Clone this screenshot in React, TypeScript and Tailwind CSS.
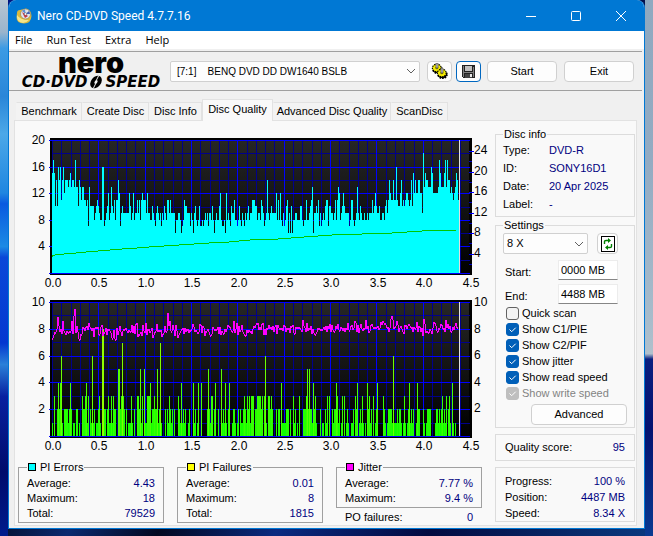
import React from 'react';

const PI_ERRORS = [
  'fhfaeagegbegceeedefd eedhddaedbddbbab7daa aa89aba988gg789ac89d a9b8bbec79a999999ca8 9c899b9',
  'b8bcbbb9c9988a9879a98979 8a98bb9b99996889986 78baa999798 69a878a77878989 799 8a8689 88ac877 86c898 7a99b88 78a879 879 89a899',
  'bbbaa8998ba9789e989a9999c8b8c87978 ab696a68899888aa8788b889abd699a9',
  'b797898abb7aa9989b8bdc89aca999978b b8789d98a98898898999b9aca99a88998a',
  'b9becbbebbgbaaceababccbabeafcecceec c9idfeedddgfcccccdhfdddfhdheecdcbcdfeb9eb',
];

const PI_FAILURES = [
  '1030024246 1022221242 0110220100 3223413021 6120112310 8822023113 1322005523 7320201113 1020033251',
  '3051133341 2232251271 0002021321 2020003214 1212001200 0412014004 0000025213 3024002005 1214102400',
  '1221012021 12321323',
  '1333022333 3230361033 2320002022 0411112220 2003120103 0002223525 2214231000 2011021303 0021224312',
  '0130301210 0112032401 2131010423 1203012400 0003210122 2216111212 2101310124 1212001422 0002101222',
  '2000012212 1231213023 104101',
];

const decode = (lines: string[]) =>
  lines
    .join('')
    .replace(/ /g, '')
    .split('')
    .map((c) => parseInt(c, 36));

const errors = decode(PI_ERRORS);
const failures = decode(PI_FAILURES);

const JITTER_PEAKS: Record<number, number> = {
  5: 8.9, 10: 8.6, 19: 8.6, 21: 9.0, 22: 9.5, 26: 7.3, 27: 7.2, 36: 8.5, 62: 7.3, 63: 7.2, 83: 8.4,
  84: 8.5, 85: 7.4, 93: 8.5, 115: 9.2, 109: 7.4, 117: 8.6, 181: 8.6, 250: 8.7, 304: 7.8, 313: 8.7,
  338: 8.8, 339: 9.0, 340: 8.7, 370: 7.5, 371: 8.8, 393: 8.7,
};

let seed = 77;
const noise = () => {
  seed = (seed * 16807) % 2147483647;
  return seed / 2147483647 - 0.5;
};

const jitter = Array.from({ length: 406 }, (_, i) => {
  const n = noise() + noise();
  const base = i < 200 ? 7.87 : i < 300 ? 8.05 : 8.15;
  return JITTER_PEAKS[i] ?? base + n * 0.6;
});

const speed =
  '0,117 1,115 3,115 12,114 24,113 34,112 46,111 58,110 70,109 85,108 97,107 112,106 127,105 142,104 157,103 177,102 198,100 226,99 252,97 280,95 310,94 340,93 370,91 400,90 404,90';

const xs = Array.from({ length: 10 }, (_, i) => i);

type ChartProps = {
  id: string;
  top: number;
  height: number;
  plotHeight: number;
  leftLabels: string[];
  rightLabels: { text: string; y: number }[];
  label: string;
  ticks?: boolean;
  children: React.ReactNode;
};

function Chart({ id, top, height, plotHeight, leftLabels, rightLabels, label, ticks, children }: ChartProps) {
  const rowStep = plotHeight / 5;
  return (
    <svg viewBox={`-37 ${-top} 480 ${height}`} className="block h-auto w-full" role="img" aria-label={label}>
      <defs>
        <linearGradient id={id} x1="0" y1="0" x2="0" y2="1">
          <stop offset="0" stopColor="#262626" />
          <stop offset="1" stopColor="#000" />
        </linearGradient>
      </defs>
      <g shapeRendering="crispEdges">
        <rect x="-2" y="-2" width="422" height={plotHeight + 4} fill="#000" />
        <rect x="0" y="0" width="417" height={plotHeight} fill={`url(#${id})`} />
        {Array.from({ length: 45 }, (_, i) => (
          <rect key={i} x={Math.round(i * 9.27)} y="0" width="1" height={plotHeight} fill="#00008b" />
        ))}
        {[0, 1, 2, 3, 4].map((i) => (
          <rect key={i} x="0" y={Math.round((i + 0.5) * rowStep)} width="418" height="1" fill="#00008b" />
        ))}
        {xs.slice(1, 9).map((i) => (
          <rect key={i} x={Math.round(i * 46.35)} y="0" width="1" height={plotHeight} fill="#0000ff" />
        ))}
        {[0, 1, 2, 3, 4, 5].map((i) => (
          <rect key={i} x="-3" y={Math.round(i * rowStep)} width="421" height="1" fill="#0000ff" />
        ))}
        {ticks &&
          rightLabels.map((r) => (
            <rect key={r.text} x="417" y={r.y + 2} width="5" height="1" fill="#0000ff" />
          ))}
        {ticks &&
          rightLabels.map((r) => (
            <rect key={r.text} x="417" y={r.y + 12} width="3" height="1" fill="#0000c0" />
          ))}
        {children}
        <rect x="407" y="0" width="1" height={plotHeight} fill="#e0e0e0" />
      </g>
      <g className="fill-black font-['Liberation_Sans',Arial,sans-serif] text-[12px]">
        {leftLabels.map((t, i) => (
          <text key={t} x="-7" y={Math.round(i * rowStep) + 4} textAnchor="end">
            {t}
          </text>
        ))}
        {rightLabels.map((r) => (
          <text key={r.text} x="422" y={r.y + 5}>
            {r.text}
          </text>
        ))}
        {xs.map((i) => (
          <text key={i} x={Math.round(i * 46.4) + 1} y={plotHeight + 14} textAnchor="middle">
            {(i / 2).toFixed(1)}
          </text>
        ))}
      </g>
    </svg>
  );
}

function ErrorsChart() {
  return (
    <Chart
      id="plot-errors"
      label="PI errors and read speed"
      top={9}
      height={160}
      plotHeight={133}
      ticks
      leftLabels={['20', '16', '12', '8', '4']}
      rightLabels={[
        { text: '24', y: 9 },
        { text: '20', y: 30 },
        { text: '16', y: 50 },
        { text: '12', y: 71 },
        { text: '8', y: 91 },
        { text: '4', y: 112 },
      ]}
    >
      {errors.slice(0, 407).map((v, i) => {
        const h = Math.round(v * 6.65);
        return <rect key={i} x={i} y={133 - h} width="1" height={h} fill="#00ffff" />;
      })}
      <polyline points={speed} fill="none" stroke="#00c800" strokeWidth="1" />
    </Chart>
  );
}

function FailuresChart() {
  return (
    <Chart
      id="plot-failures"
      label="PI failures and jitter"
      top={11}
      height={163}
      plotHeight={134}
      leftLabels={['10', '8', '6', '4', '2']}
      rightLabels={[
        { text: '10', y: -1 },
        { text: '8', y: 26 },
        { text: '6', y: 52 },
        { text: '4', y: 79 },
        { text: '2', y: 105 },
      ]}
    >
      {failures.slice(0, 406).map((v, i) => {
        const h = Math.round(v * 13.35);
        return <rect key={i} x={i} y={134 - h} width="1" height={h} fill={`rgb(${v * 18}, 255, 0)`} />;
      })}
      {jitter.map((v, i) => {
        const y = Math.round(134 - v * 13.35);
        const before = Math.round(134 - (jitter[i - 1] ?? v) * 13.35);
        const y0 = Math.min(y, before);
        return <rect key={i} x={i} y={y0} width="1" height={Math.max(2, Math.abs(y - before))} fill="#ff00ff" />;
      })}
    </Chart>
  );
}

function Row({ label, value }: { label: string; value: string }) {
  return (
    <div className="flex justify-between">
      <dt>{label}</dt>
      <dd className="text-[#000080]">{value}</dd>
    </div>
  );
}

function Stat({ title, swatch, rows }: { title: string; swatch: string; rows: [string, string][] }) {
  return (
    <fieldset className="border border-[#a0a0a0] px-2 pb-px">
      <legend className="flex h-[14px] items-center gap-1 px-px leading-[14px]">
        <span className={`size-2 border border-black ${swatch}`} />
        {title}
      </legend>
      <dl className="pt-[2px] leading-[15px]">
        {rows.map(([l, v]) => (
          <Row key={l} label={l} value={v} />
        ))}
      </dl>
    </fieldset>
  );
}

function Check({ label, checked = false, disabled = false }: { label: string; checked?: boolean; disabled?: boolean }) {
  return (
    <label className={`flex h-4 items-center gap-[3px] ${disabled ? 'text-[#838383]' : ''}`}>
      <span className="grid size-[13px]">
        <input
          type="checkbox"
          defaultChecked={checked}
          disabled={disabled}
          className="peer col-start-1 row-start-1 size-[13px] appearance-none rounded-[3px] border border-[#626262] bg-[#f3f3f3] checked:border-[#005fb8] checked:bg-[#005fb8] disabled:border-[#bfbfbf] disabled:bg-[#bfbfbf]"
        />
        <svg viewBox="0 0 13 13" className="pointer-events-none invisible col-start-1 row-start-1 size-[13px] peer-checked:visible">
          <path d="M3.5 6.5 5.7 8.7 9.7 4.7" fill="none" stroke="#fff" strokeWidth="1" />
        </svg>
      </span>
      {label}
    </label>
  );
}

function Chevron() {
  return (
    <svg viewBox="0 0 10 6" className="pointer-events-none col-start-1 row-start-1 mr-1 h-[6px] w-[10px] self-center justify-self-end">
      <path d="M1 1 5 5 9 1" fill="none" stroke="#606060" />
    </svg>
  );
}

function AppIcon() {
  return (
    <svg viewBox="0 0 16 16" className="size-4">
      <path d="M1 5Q1 2 4 2L10 .5Q15.500 2 15.500 8Q15 15.500 8 15.500Q.5 15.500 .5 9Z" fill="#d9b93c" />
      <path d="M1 7Q4 12 13 12Q10 15 7 15Q1 14 1 9Z" fill="#f5e58a" />
      <circle cx="9.5" cy="6" r="5" fill="#dfe6ee" stroke="#8a7a50" strokeWidth=".6" />
      <path d="M9.5 6 6 3A5 5 0 0 1 9 1.5Z" fill="#5d8fd8" />
      <path d="M9.5 6 13 3A5 5 0 0 1 14 6Z" fill="#3c5fb8" />
      <path d="M6 4 12 8 9 10Z" fill="#c8323c" />
      <circle cx="9.5" cy="6" r="1.3" fill="#fff" stroke="#445" strokeWidth=".5" />
    </svg>
  );
}

function Gear({ x, y }: { x: number; y: number }) {
  return (
    <g transform={`translate(${x} ${y})`}>
      <ellipse cx="5.5" cy="6.5" rx="4.5" ry="3.8" fill="#000" stroke="#000" strokeWidth="1.6" strokeDasharray="1.6 1" />
      <ellipse cx="4.8" cy="5" rx="4.4" ry="3.8" fill="#f4ec00" stroke="#000" strokeWidth="1.2" strokeDasharray="1.4 .9" />
      <ellipse cx="4.8" cy="5" rx="1.6" ry="1.3" fill="#8a8400" />
      <path d="M4 0H6V5H4Z" fill="#c8c8c8" stroke="#333" strokeWidth=".6" />
    </g>
  );
}

function Logo() {
  return (
    <div className="flex w-[146px] flex-col items-center text-black">
      <span className="font-['Inter',sans-serif] text-[29px] leading-[22px] font-black">nero</span>
      <span className="flex items-center font-['DejaVu_Sans',sans-serif] text-[15px] leading-[16px] font-bold italic">
        CD·DVD
        <svg viewBox="0 0 18 14" className="h-[14px] w-[18px]">
          <ellipse cx="9" cy="7" rx="5" ry="7" transform="rotate(38 9 7)" fill="#000" />
          <ellipse cx="9" cy="7" rx="1.3" ry="2.2" transform="rotate(32 9 7)" fill="#f0f0f0" />
          <path d="M11.5 1 9.5 5M6.5 13 8.500 9" stroke="#f0f0f0" />
        </svg>
        SPEED
      </span>
    </div>
  );
}

const button = 'flex items-center justify-center rounded-[4px] border border-[#d0d0d0] bg-[#fdfdfd]';
const TABS = [
  ['Benchmark', 'w-[66px]'],
  ['Create Disc', 'w-[67px]'],
  ['Disc Info', 'w-[53px]'],
  ['Disc Quality', 'w-[71px]'],
  ['Advanced Disc Quality', 'w-[118px]'],
  ['ScanDisc', 'w-[57px]'],
];

export default function App() {
  return (
    <div className="grid min-h-screen grid-cols-[8px_1fr_8px] grid-rows-[auto_1fr] bg-[linear-gradient(115deg,#00107a,#0a2a90_6%,#3a80c8_8%,#0a2a90_10%,#2a6cc0_12%,#061a70_15%,#2a62c0_20%,#020820_25%,#0a2a70_35%,#020820_45%,#0a2a80_58%,#020a40_75%,#0a3a80_100%)] font-['Liberation_Sans',Arial,sans-serif] text-[11px] text-black">
      <div className="row-span-2 bg-[linear-gradient(180deg,#b8c6d2,#9ab4cc_6%,#3c9be4_9%,#2a86d8_18%,#4ca8e8_25%,#1f86e0_36%,#0a5ae0_38%,#1c8ae4_46%,#0a48d8_48%,#0438d0_64%,#2a80d8_68%,#0820a0_74%,#000c6c_88%,#001a8c)]" />
      <main className="overflow-hidden rounded-t-lg border-x border-b border-[#0078d4] bg-[#f0f0f0]">
        <header className="-mx-px flex h-[31px] items-center bg-[#0078d4] pl-2 text-white">
          <AppIcon />
          <h1 className="flex-1 pl-[5px] font-['Roboto',sans-serif] text-[12px]">Nero CD-DVD Speed 4.7.7.16</h1>
          <button aria-label="Minimize" className="flex h-full w-[45px] items-center justify-center">
            <svg viewBox="0 0 10 10" className="size-[10px]"><path d="M0 5.5H10" stroke="#fff" /></svg>
          </button>
          <button aria-label="Maximize" className="flex h-full w-[45px] items-center justify-center">
            <svg viewBox="0 0 10 10" className="size-[10px]"><rect x=".5" y=".5" width="9" height="9" rx="1" fill="none" stroke="#fff" /></svg>
          </button>
          <button aria-label="Close" className="mr-[2px] flex h-full w-[45px] items-center justify-center">
            <svg viewBox="0 0 10 10" className="size-[10px]"><path d="M0 0 10 10M10 0 0 10" stroke="#fff" /></svg>
          </button>
        </header>
        <nav className="flex h-[18px] items-center gap-[14px] bg-white pt-px pl-[6px] font-['Open_Sans',sans-serif] text-[11px]">
          <button>File</button>
          <button>Run Test</button>
          <button>Extra</button>
          <button>Help</button>
        </nav>
        <div className="mt-[2px] mr-[2px] flex h-10 items-center border-y border-[#a0a0a0] pl-[9px]">
          <Logo />
          <div className="ml-[6px] grid flex-1">
            <select aria-label="Drive" className="col-start-1 row-start-1 h-[21px] appearance-none rounded-[2px] border border-[#d0d0d0] bg-[#fdfdfd] pl-[6px] text-[10px] whitespace-pre">
              <option>{'[7:1]\u00a0\u00a0\u00a0\u00a0BENQ DVD DD DW1640 BSLB'}</option>
            </select>
            <Chevron />
          </div>
          <button aria-label="Options" className={`${button} ml-[7px] h-[21px] w-[25px]`}>
            <svg viewBox="0 0 17 16" className="h-4 w-[17px]">
              <Gear x={1} y={0} />
              <Gear x={6} y={5} />
            </svg>
          </button>
          <button aria-label="Save" className="ml-1 flex h-[21px] w-[25px] items-center justify-center rounded-[4px] border border-[#0067c0] bg-[#fdfdfd]">
            <svg viewBox="0 0 13 13" className="size-[13px]" shapeRendering="crispEdges">
              <path d="M0 0H13V13H1L0 12Z" fill="#222" />
              <path d="M1 1H2V12H1ZM11 2H12V12H11Z" fill="#808080" />
              <path d="M3 1H10V6H3Z" fill="#c0c0c0" />
              <path d="M2 7H11V8H2Z" fill="#808080" />
              <path d="M3 9H10V13H3Z" fill="#444" />
              <path d="M8 9H10V12H8Z" fill="#e8e8e8" />
            </svg>
          </button>
          <button className={`${button} ml-[6px] h-[21px] w-[70px]`}>Start</button>
          <button className={`${button} mr-2 ml-[7px] h-[21px] w-[70px]`}>Exit</button>
        </div>
        <div role="tablist" className="mt-2 flex items-end pl-[7px]">
          {TABS.map(([name, width]) => (
            <button
              key={name}
              role="tab"
              aria-selected={name === 'Disc Quality'}
              className={`${width} shrink-0 border-x border-t whitespace-nowrap border-[#e2e2e2] ${
                name === 'Disc Quality' ? '-mb-px h-[22px] bg-[#f9f9f9] pb-[2px]' : 'h-[18px] border-l-transparent bg-[#f3f3f3]'
              }`}
            >
              {name}
            </button>
          ))}
        </div>
        <section className="mr-[7px] mb-[2px] ml-[5px] flex border border-[#e2e2e2] bg-[#f9f9f9]">
          <div className="min-w-0 flex-1 pt-[10px]">
            <ErrorsChart />
            <FailuresChart />
            <div className="grid grid-cols-3 items-start gap-[13px] pt-[6px] pr-[13px] pl-[3px]">
              <Stat title="PI Errors" swatch="bg-[#00ffff]" rows={[['Average:', '4.43'], ['Maximum:', '18'], ['Total:', '79529']]} />
              <Stat title="PI Failures" swatch="bg-[#ffff00]" rows={[['Average:', '0.01'], ['Maximum:', '8'], ['Total:', '1815']]} />
              <div>
                <Stat title="Jitter" swatch="bg-[#ff00ff]" rows={[['Average:', '7.77 %'], ['Maximum:', '9.4 %']]} />
                <dl className="px-[9px] pt-[2px] leading-[15px]">
                  <Row label="PO failures:" value="0" />
                </dl>
              </div>
            </div>
          </div>
          <aside className="mr-px w-[140px] shrink-0 pt-[6px] pb-[3px]">
            <fieldset className="border border-[#dcdcdc] px-[7px] pb-[3px]">
              <legend className="h-[14px] px-px leading-[14px]">Disc info</legend>
              <dl className="grid grid-cols-[46px_1fr] leading-[18px] [&>dd]:text-[#000080]">
                <dt>Type:</dt>
                <dd>DVD-R</dd>
                <dt>ID:</dt>
                <dd>SONY16D1</dd>
                <dt>Date:</dt>
                <dd>20 Apr 2025</dd>
                <dt>Label:</dt>
                <dd>-</dd>
              </dl>
            </fieldset>
            <fieldset className="mt-px border border-[#dcdcdc] px-[7px] pb-[2px]">
              <legend className="h-[14px] px-px leading-[14px]">Settings</legend>
              <div className="flex gap-[9px] pt-px">
                <div className="grid w-[85px]">
                  <select aria-label="Speed" className="col-start-1 row-start-1 h-[21px] appearance-none rounded-[2px] border border-[#d0d0d0] bg-[#fdfdfd] pl-[3px]">
                    <option>8 X</option>
                  </select>
                  <Chevron />
                </div>
                <button aria-label="Refresh" className={`${button} h-[21px] w-[21px]`}>
                  <svg viewBox="0 0 14 16" className="h-4 w-[14px]">
                    <rect x=".5" y=".5" width="13" height="15" fill="#fff" stroke="#000" />
                    <path d="M3.5 8V5.5Q3.5 4.5 5 4.5H7.5M10.5 8V10.5Q10.5 11.5 9 11.5H6.5" fill="none" stroke="#008000" strokeWidth="1.4" />
                    <path d="M7 2 10 4.5 7 7ZM7 9 4 11.500 7 14Z" fill="#008000" />
                  </svg>
                </button>
              </div>
              <div className="grid grid-cols-[53px_60px] items-center gap-y-[3px] pt-[6px] pl-[2px]">
                <label htmlFor="start" className="pt-1">Start:</label>
                <input id="start" defaultValue="0000 MB" className="h-5 border border-[#ececec] border-b-[#868686] bg-white px-[2px]" />
                <label htmlFor="end" className="pt-1">End:</label>
                <input id="end" defaultValue="4488 MB" className="h-5 border border-[#ececec] border-b-[#868686] bg-white px-[2px]" />
              </div>
              <div className="pt-px pl-[3px]">
                <Check label="Quick scan" />
                <Check label="Show C1/PIE" checked />
                <Check label="Show C2/PIF" checked />
                <Check label="Show jitter" checked />
                <Check label="Show read speed" checked />
                <Check label="Show write speed" checked disabled />
              </div>
              <button className={`${button} mt-[3px] ml-auto h-[21px] w-[96px]`}>Advanced</button>
            </fieldset>
            <dl className="mt-[6px] border border-[#dcdcdc] px-[9px] leading-[25px]">
              <Row label="Quality score:" value="95" />
            </dl>
            <dl className="mt-[6px] border border-[#dcdcdc] px-[9px] pt-[5px] leading-4">
              <Row label="Progress:" value="100 %" />
              <Row label="Position:" value="4487 MB" />
              <Row label="Speed:" value="8.34 X" />
            </dl>
          </aside>
        </section>
      </main>
      <div className="row-span-2 bg-[linear-gradient(180deg,#8fa9c0,#93abc2_30%,#a8bccb_60%,#b0c0cc_66%,#0a1f80_67%,#041270_80%,#0a3a90)]" />
    </div>
  );
}
